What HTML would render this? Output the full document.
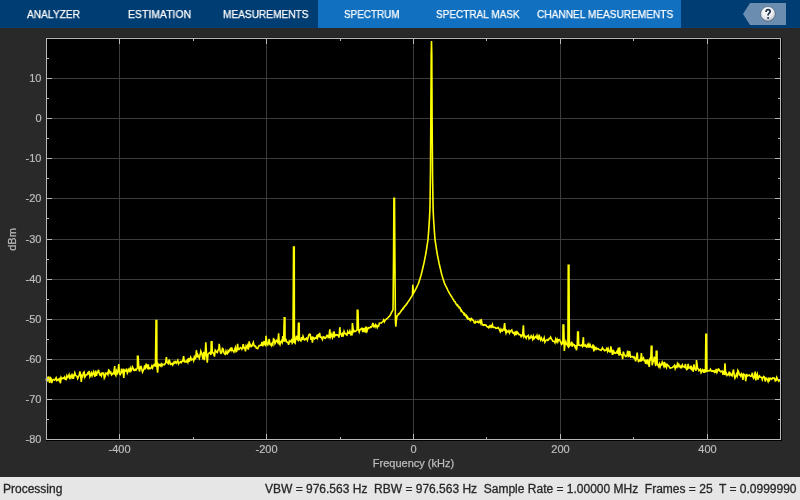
<!DOCTYPE html>
<html><head><meta charset="utf-8"><style>
html,body{margin:0;padding:0;}
body{width:800px;height:500px;overflow:hidden;background:#292929;position:relative;font-family:"Liberation Sans",sans-serif;}
#hdr{position:absolute;left:0;top:0;width:800px;height:28px;background:#003d73;}
#act{position:absolute;left:318px;top:0;width:363px;height:28px;background:#1170c0;}
.tab{position:absolute;top:8px;height:12px;line-height:12px;color:#fff;font-size:11px;font-weight:normal;transform:scaleX(0.9);transform-origin:0 0;-webkit-text-stroke:0.25px #fff;white-space:nowrap;}
#status{position:absolute;left:0;top:477px;width:800px;height:23px;background:#e6e6e6;color:#262626;font-size:12px;}
#status span{position:absolute;top:5px;line-height:14px;white-space:pre;-webkit-text-stroke:0.3px #2a2a2a;}
svg{position:absolute;left:0;top:0;will-change:transform;}
#status,.tab{will-change:transform;}
</style></head><body>
<div id="hdr"></div>
<div id="act"></div>
<div class="tab" style="left:27px;transform:scaleX(0.925)">ANALYZER</div>
<div class="tab" style="left:128px;transform:scaleX(0.95)">ESTIMATION</div>
<div class="tab" style="left:223px;transform:scaleX(0.92)">MEASUREMENTS</div>
<div class="tab" style="left:344px;transform:scaleX(0.9)">SPECTRUM</div>
<div class="tab" style="left:436px;transform:scaleX(0.91)">SPECTRAL MASK</div>
<div class="tab" style="left:537px;transform:scaleX(0.92)">CHANNEL MEASUREMENTS</div>
<svg width="800" height="28" style="top:0">
<polygon points="750,3 786,3 786,25 750,25 743,14" fill="#6b8db0"/>
<defs><radialGradient id="hg" cx="0.4" cy="0.3" r="0.8"><stop offset="0" stop-color="#ffffff"/><stop offset="0.6" stop-color="#e8eaee"/><stop offset="1" stop-color="#9aa4b0"/></radialGradient></defs>
<circle cx="768" cy="13.9" r="7.3" fill="url(#hg)" stroke="#34465e" stroke-width="0.7" stroke-opacity="0.75"/>
<path d="M766.1,11.9 C766.1,10.4 767,9.7 768.1,9.7 C769.4,9.7 770.2,10.5 770.2,11.5 C770.2,12.9 768.1,13.2 768.1,14.8 V15.5" fill="none" stroke="#1f2f4a" stroke-width="1.7"/>
<circle cx="768.1" cy="17.9" r="1" fill="#1f2f4a"/>
</svg>
<svg width="800" height="477" style="top:0">
<rect x="46" y="38" width="736" height="403" fill="#000"/><rect x="46" y="37" width="736" height="1" fill="#1f1f1f"/>
<g stroke="#3c3c3c" stroke-width="1" shape-rendering="crispEdges"><line x1="119.5" y1="38" x2="119.5" y2="439"/><line x1="266.5" y1="38" x2="266.5" y2="439"/><line x1="413.5" y1="38" x2="413.5" y2="439"/><line x1="560.5" y1="38" x2="560.5" y2="439"/><line x1="707.5" y1="38" x2="707.5" y2="439"/><line x1="46" y1="78.5" x2="780" y2="78.5"/><line x1="46" y1="118.5" x2="780" y2="118.5"/><line x1="46" y1="158.5" x2="780" y2="158.5"/><line x1="46" y1="198.5" x2="780" y2="198.5"/><line x1="46" y1="239.5" x2="780" y2="239.5"/><line x1="46" y1="279.5" x2="780" y2="279.5"/><line x1="46" y1="319.5" x2="780" y2="319.5"/><line x1="46" y1="359.5" x2="780" y2="359.5"/><line x1="46" y1="399.5" x2="780" y2="399.5"/></g>
<polyline points="46.00,378.77 46.72,380.53 47.44,380.76 48.16,376.53 48.88,378.67 49.60,382.86 50.32,377.52 51.04,378.28 51.76,383.09 52.48,380.33 53.20,379.47 53.92,379.84 54.64,380.24 55.36,378.79 56.08,377.75 56.80,380.54 57.52,379.83 58.24,379.20 58.96,380.41 59.68,379.09 60.40,383.25 61.12,377.53 61.84,378.78 62.56,378.44 63.28,377.88 64.00,378.47 64.72,377.04 65.44,379.16 66.16,379.56 66.88,375.79 67.60,377.39 68.32,376.54 69.04,374.77 69.76,379.17 70.48,376.75 71.20,375.23 71.92,377.38 72.64,375.51 73.36,378.86 74.08,375.47 74.80,372.85 75.52,375.22 76.24,375.88 76.96,376.22 77.68,378.49 78.40,376.84 79.12,375.56 79.84,371.44 80.56,374.40 81.28,381.87 82.00,375.69 82.72,376.38 83.44,372.67 84.16,371.96 84.88,377.10 85.60,375.70 86.32,374.72 87.04,374.68 87.76,372.90 88.48,373.72 89.20,371.01 89.92,376.54 90.64,374.84 91.36,373.02 92.08,375.67 92.80,373.45 93.52,371.83 94.24,374.88 94.96,376.65 95.68,370.54 96.40,375.71 97.12,373.09 97.84,372.07 98.56,369.81 99.28,373.53 100.00,375.02 100.72,374.13 101.44,375.76 102.16,372.93 102.88,373.39 103.60,373.07 104.32,378.15 105.04,376.75 105.76,373.30 106.48,373.57 107.20,373.06 107.92,374.54 108.64,370.14 109.36,370.78 110.08,373.13 110.80,372.39 111.52,374.87 112.24,374.11 112.96,373.28 113.68,373.61 114.70,366.00 115.12,374.06 115.84,375.49 116.56,371.19 117.28,373.14 118.00,371.00 118.80,364.00 119.44,373.69 120.16,374.58 120.88,373.40 121.60,368.72 122.32,371.72 123.04,370.52 123.76,377.91 124.48,370.10 125.20,370.68 125.92,371.07 126.64,368.55 127.36,373.09 128.08,371.57 128.80,369.47 129.52,370.87 130.24,368.25 130.96,370.96 131.68,369.45 132.40,366.91 133.12,368.25 133.84,370.27 134.56,370.41 135.28,369.27 136.00,370.18 136.72,369.13 137.44,367.67 137.45,356.30 138.15,356.30 138.88,368.91 139.60,371.46 140.32,367.00 141.04,366.48 141.76,368.91 142.48,372.13 143.20,370.75 143.92,369.04 144.64,365.51 145.36,369.39 146.20,363.70 146.80,366.17 147.52,367.63 148.24,364.48 148.96,368.73 149.68,368.13 150.40,368.48 151.12,368.04 151.84,366.04 152.56,367.89 153.28,365.62 154.00,364.66 154.72,365.90 155.44,366.07 156.05,320.60 156.75,320.60 156.88,366.07 157.60,372.60 158.32,364.44 159.04,365.65 159.76,364.65 160.48,365.80 161.20,364.05 161.92,365.85 162.64,364.24 163.36,364.53 164.08,364.83 164.80,364.18 165.52,363.12 166.40,357.20 166.96,361.55 167.68,363.07 168.40,363.67 169.12,359.56 169.84,361.71 170.56,364.41 171.28,364.19 172.00,363.37 172.72,365.01 173.44,363.66 174.16,361.88 174.88,362.92 175.60,361.81 176.32,363.15 177.04,361.74 177.76,360.38 178.48,363.74 179.20,362.38 179.92,362.52 180.64,361.66 181.36,362.50 182.08,361.10 182.80,361.32 183.60,356.20 184.24,361.05 184.96,362.11 185.68,361.37 186.40,361.78 187.12,360.37 187.84,362.17 188.56,358.02 189.28,361.82 190.00,359.40 190.72,357.36 191.44,359.88 192.16,359.24 192.88,359.02 193.60,360.72 194.32,357.08 195.04,358.79 195.76,357.78 196.40,350.20 197.20,357.24 197.92,355.07 198.64,356.74 199.36,358.33 200.08,355.02 200.80,351.10 201.52,353.23 202.24,355.55 202.96,359.40 203.68,351.85 204.40,360.26 205.12,354.68 205.80,342.20 206.56,353.80 207.28,362.60 208.00,354.25 208.72,353.54 209.44,352.59 210.16,352.35 210.88,354.96 211.25,341.80 211.95,341.80 212.32,352.83 213.04,352.65 213.76,353.72 214.48,356.60 215.20,350.21 215.92,351.06 216.64,352.14 217.36,352.57 218.08,349.89 218.80,349.48 219.20,343.80 220.24,352.09 220.96,353.29 221.68,352.72 222.40,348.53 223.12,349.08 223.84,352.17 224.56,353.99 225.28,354.29 226.00,351.25 226.72,353.46 227.44,353.86 228.16,350.72 228.88,351.69 229.60,350.13 230.32,348.73 231.04,350.32 231.76,347.51 232.48,350.29 233.20,350.98 233.92,352.01 234.64,349.39 235.36,347.51 236.08,351.60 236.80,351.14 237.60,343.80 238.24,349.46 238.96,349.68 239.68,348.64 240.40,347.54 241.12,347.98 241.84,349.31 242.56,347.75 243.20,344.20 244.00,347.97 244.72,347.63 245.44,351.28 246.16,345.91 246.88,347.18 247.60,345.48 248.32,349.64 249.20,341.40 249.76,345.91 250.48,344.89 251.20,346.59 251.92,345.95 252.64,344.35 253.36,342.45 254.08,345.76 254.80,346.29 255.52,346.04 256.24,348.11 256.96,348.22 257.68,348.61 258.40,346.97 259.12,345.57 259.84,345.59 260.56,345.11 261.28,345.01 262.00,341.84 262.72,346.32 263.44,344.03 264.16,341.05 264.88,344.67 265.60,345.43 266.00,335.80 267.04,344.02 267.76,344.85 268.48,342.71 269.20,339.01 269.92,344.29 270.64,343.99 271.36,345.57 272.08,343.44 272.80,344.73 273.52,338.98 274.24,339.44 274.96,343.55 275.68,342.08 276.40,340.33 277.12,341.09 277.84,342.43 278.60,333.40 279.28,342.79 280.00,344.51 280.72,341.97 281.44,340.94 282.16,342.41 282.88,336.11 283.60,341.69 284.25,317.80 284.95,317.80 285.04,341.55 285.76,338.74 286.48,341.91 287.20,342.07 287.92,342.54 288.64,344.86 289.36,341.00 290.08,341.89 290.80,341.12 291.52,340.05 292.24,343.12 292.96,341.90 293.55,247.00 294.25,247.00 294.40,342.17 295.12,343.12 295.84,338.74 296.56,335.81 297.28,339.13 298.00,340.02 298.45,323.40 299.15,323.40 299.44,339.90 300.16,340.01 300.88,340.84 301.60,337.08 302.32,340.19 303.04,336.32 303.76,338.40 304.48,340.01 305.20,339.71 305.92,338.68 306.64,338.12 307.36,340.15 308.08,337.79 308.80,334.86 309.60,334.20 310.24,334.33 310.96,339.91 311.68,336.70 312.40,342.59 313.12,337.45 313.84,337.94 314.56,338.85 315.28,337.95 316.00,338.23 316.72,336.37 317.44,338.05 318.16,334.24 318.88,337.08 319.60,333.00 320.32,337.17 321.04,337.02 321.76,338.34 322.48,339.59 323.20,336.81 323.92,337.03 324.64,338.03 325.36,338.31 326.08,337.33 326.80,335.45 327.52,335.32 328.24,337.53 328.96,337.13 329.80,329.40 330.40,337.23 331.12,335.74 331.84,334.05 332.56,337.77 333.28,336.28 334.00,331.40 334.72,336.00 335.44,334.93 336.16,334.67 336.88,335.29 337.60,334.91 338.32,335.58 339.04,337.52 339.80,327.20 340.48,334.16 341.20,333.96 341.92,336.81 342.64,333.75 343.36,335.17 344.08,331.51 344.80,333.50 345.52,333.54 346.24,334.65 346.96,335.11 347.68,331.46 348.40,333.28 349.12,333.18 349.84,331.02 350.56,333.92 351.28,332.37 352.00,335.47 352.40,323.00 353.44,331.64 354.16,330.76 354.88,331.59 355.60,331.25 356.32,330.74 357.04,329.91 357.25,310.20 357.95,310.20 358.48,329.68 359.20,331.95 359.92,329.61 360.64,329.47 361.36,328.47 362.08,328.26 362.80,332.22 363.52,328.19 364.24,330.44 364.96,328.74 365.68,332.66 366.40,326.58 367.12,330.75 367.84,328.68 368.56,327.62 369.28,327.88 370.00,327.70 370.72,326.66 371.44,326.92 372.16,325.51 372.88,322.88 373.60,326.35 374.32,325.64 375.04,326.96 375.76,324.62 376.48,325.78 377.20,327.56 377.92,325.64 378.64,326.08 379.36,323.14 380.08,322.96 380.80,322.95 381.52,322.98 382.24,322.01 382.96,321.55 383.68,320.01 384.40,321.67 385.12,320.07 385.84,319.64 386.56,318.87 387.28,318.42 388.00,317.80 388.72,316.90 389.44,316.32 390.16,315.22 390.88,313.95 391.60,312.47 392.32,311.08 393.04,309.65 393.60,250.00 393.90,198.30 394.50,198.30 394.90,260.00 395.40,320.00 395.80,326.60 396.40,320.00 397.20,315.60 398.00,315.23 398.50,313.81 399.00,314.05 399.50,313.57 400.00,312.55 400.50,311.83 401.00,311.50 401.50,310.06 402.00,310.01 402.50,309.72 403.00,308.30 403.50,308.42 404.00,307.34 404.50,306.22 405.00,306.19 405.50,305.33 406.00,305.06 406.50,304.00 407.00,303.81 407.50,302.63 408.00,302.13 408.50,301.18 409.00,300.49 409.50,300.02 410.00,299.09 410.50,298.24 411.00,297.30 411.50,296.81 412.00,295.89 412.50,294.92 412.80,284.80 413.50,293.17 414.00,292.33 414.50,291.51 415.00,290.61 415.50,289.59 416.00,288.54 416.50,287.57 417.00,286.55 417.50,285.52 418.00,284.51 418.50,283.38 419.00,281.80 419.50,280.22 420.00,278.64 420.50,277.06 421.00,275.47 421.50,273.53 422.00,271.42 422.50,269.32 423.00,267.21 423.50,265.11 424.00,263.00 424.50,260.44 425.00,257.88 425.50,255.32 426.00,252.76 426.50,249.54 427.00,246.24 427.50,242.95 428.00,239.66 428.50,233.07 429.00,225.67 429.50,217.92 430.00,207.15 430.50,170.00 431.20,55.00 431.50,41.00 431.80,55.00 432.10,120.00 432.60,178.75 433.10,209.31 433.60,219.74 434.10,227.15 434.60,234.56 435.10,240.32 435.60,243.61 436.10,246.90 436.60,250.20 437.10,253.27 437.60,255.83 438.10,258.39 438.60,260.95 439.10,263.42 439.60,265.53 440.10,267.63 440.60,269.74 441.10,271.84 441.60,273.95 442.10,275.79 442.60,277.37 443.10,278.95 443.60,280.54 444.10,282.12 444.60,283.70 445.10,284.71 445.60,285.73 446.10,286.72 446.60,287.71 447.10,288.71 447.60,289.73 448.10,290.78 448.60,291.65 449.10,292.61 449.60,293.62 450.10,294.26 450.60,295.30 451.10,296.01 451.60,296.63 452.10,297.62 452.60,298.26 453.10,299.36 453.60,299.70 454.10,301.00 454.60,301.59 455.10,301.68 455.60,303.16 456.10,304.14 456.60,304.22 457.10,305.40 457.60,305.14 458.10,306.43 458.60,306.39 459.10,307.77 459.60,307.55 460.10,307.82 460.60,309.63 461.10,311.05 461.60,310.47 462.10,311.72 462.60,312.03 463.10,312.45 463.60,313.52 464.10,314.64 464.60,313.88 465.10,315.37 465.60,315.82 466.10,315.31 466.60,317.37 467.10,318.07 467.60,317.16 468.10,318.89 468.60,318.51 469.10,318.71 469.60,319.68 470.00,319.02 470.72,320.39 471.44,318.57 472.16,319.23 472.88,320.25 473.60,320.53 474.32,322.90 475.04,323.11 475.76,321.43 476.48,322.08 477.20,322.22 477.92,321.27 478.64,322.64 479.36,322.48 480.40,319.40 480.80,322.68 481.52,321.02 482.24,324.94 482.96,324.82 483.68,325.23 484.40,324.71 485.12,325.28 485.84,325.02 486.56,326.07 487.28,326.82 488.00,326.75 488.72,327.71 489.44,326.05 490.16,326.98 490.88,325.83 491.60,326.97 492.40,324.60 493.04,327.27 493.76,327.42 494.48,327.27 495.20,327.49 495.92,328.40 496.64,328.16 497.36,328.24 498.08,327.42 498.80,328.37 499.52,330.05 500.24,331.72 500.96,329.24 501.68,330.88 502.40,331.12 503.12,329.34 503.84,329.71 504.60,323.00 505.28,330.16 506.00,333.08 506.72,330.68 507.44,331.76 508.16,331.87 508.88,330.68 509.60,333.02 510.32,331.48 511.04,330.57 511.76,329.97 512.48,332.49 513.20,333.15 513.92,332.40 514.64,334.54 515.36,332.83 516.08,335.07 516.80,330.91 517.52,333.47 518.24,333.12 518.96,334.54 519.68,334.48 520.40,334.78 521.12,336.63 521.84,335.49 522.56,335.67 523.40,325.40 524.00,336.80 524.72,335.71 525.44,336.68 526.16,338.19 526.88,336.36 527.60,335.96 528.32,335.42 529.04,338.73 529.76,337.57 530.48,337.93 531.20,335.74 531.92,336.80 532.64,339.10 533.36,336.31 534.08,338.75 534.80,337.67 535.52,336.59 536.24,337.47 536.96,335.50 537.68,338.79 538.40,339.22 539.12,334.73 539.84,338.08 540.56,339.98 541.28,337.89 542.00,339.40 542.72,340.76 543.44,339.86 544.16,337.91 544.88,342.19 545.60,340.88 546.32,340.22 547.04,339.55 547.76,340.42 548.48,339.92 549.20,338.38 549.92,338.49 550.64,337.22 551.36,339.08 552.08,339.66 552.80,341.23 553.52,341.22 554.24,341.43 554.96,342.73 555.68,339.28 556.40,341.36 557.12,339.39 557.84,341.82 558.56,339.75 559.28,339.69 560.00,340.48 560.72,342.46 561.44,344.01 562.16,342.43 562.88,344.29 563.05,325.00 563.75,325.00 564.32,351.00 565.04,343.92 565.76,341.64 566.48,344.25 567.20,344.85 567.92,346.07 568.25,265.40 568.95,265.40 569.36,345.99 570.08,345.00 570.80,345.03 571.52,341.72 572.24,346.73 572.96,344.00 573.68,344.93 574.40,344.91 575.12,347.12 575.84,345.11 576.56,350.28 577.28,343.76 577.65,332.00 578.35,332.00 578.72,345.17 579.44,345.13 580.16,345.63 580.88,345.52 581.60,344.99 582.32,346.11 583.40,337.20 583.76,345.89 584.48,345.96 585.20,345.09 585.92,346.58 586.64,347.12 587.36,344.87 588.08,346.22 588.80,344.28 589.52,347.57 590.24,345.01 590.96,346.59 591.68,347.67 592.40,347.86 593.12,344.51 593.84,351.40 594.56,347.46 595.28,348.99 596.00,347.71 596.72,349.23 597.44,348.62 598.16,348.62 598.88,349.31 599.60,349.78 600.32,349.96 601.04,350.45 601.76,349.11 602.48,347.78 603.20,349.26 603.92,349.71 604.64,350.72 605.36,350.25 606.08,349.97 606.80,348.52 607.52,351.12 608.24,348.89 608.96,351.09 609.68,351.79 610.40,351.71 610.80,346.40 611.84,351.31 612.56,354.88 613.28,349.91 614.00,353.04 614.72,352.48 615.44,353.23 616.16,352.79 616.88,351.45 617.60,353.74 618.32,347.83 619.04,355.76 619.50,347.40 620.48,354.00 621.20,354.63 621.92,354.74 622.64,359.12 623.36,351.64 624.08,354.36 624.80,354.92 625.52,356.49 626.24,356.30 626.96,355.38 627.68,350.67 628.40,356.41 629.12,355.91 629.60,351.00 630.56,357.11 631.28,356.79 632.00,356.54 632.72,356.62 633.44,357.76 634.16,357.01 634.88,357.88 635.60,361.37 636.32,358.59 637.20,352.60 637.76,358.92 638.48,361.40 639.20,360.86 639.92,359.78 640.64,361.46 641.40,353.00 642.08,360.12 642.80,359.41 643.52,358.10 644.24,360.69 644.96,360.41 645.68,363.84 646.40,359.68 647.12,362.31 647.84,359.45 648.56,363.72 649.28,366.86 650.00,357.81 650.72,360.56 651.25,346.20 651.95,346.20 652.16,365.20 652.88,362.36 653.60,360.35 654.32,356.61 655.04,361.83 655.76,366.06 656.25,351.40 656.95,351.40 657.20,363.53 657.92,365.06 658.64,366.59 659.36,364.02 660.08,366.88 660.80,364.33 661.52,364.74 662.24,362.19 662.96,364.06 663.68,365.88 664.40,361.78 665.12,366.15 665.84,364.71 666.56,367.24 667.28,364.62 668.00,365.41 668.72,365.91 669.44,367.13 670.16,368.29 670.88,367.91 671.60,367.81 672.32,367.49 673.04,366.97 673.76,366.30 674.48,365.40 675.20,368.50 675.92,366.43 676.64,367.15 677.36,363.94 678.08,366.16 678.80,364.39 679.52,366.06 680.24,367.38 680.96,366.13 681.68,367.36 682.40,364.97 683.12,366.62 683.84,366.81 684.56,367.21 685.50,364.00 686.00,368.08 686.72,369.46 687.44,368.94 688.16,363.96 688.88,367.80 689.60,367.44 690.32,368.28 691.04,365.79 691.76,369.18 692.48,368.25 693.20,371.59 693.92,364.37 694.64,368.69 695.36,369.04 696.08,370.68 696.50,360.00 697.52,368.14 698.24,368.99 698.96,370.65 699.68,369.70 700.40,369.15 701.12,372.72 701.84,371.66 702.56,369.67 703.28,370.30 704.00,372.84 704.72,369.11 705.44,372.57 705.85,334.20 706.55,334.20 706.88,371.16 707.60,371.01 708.32,371.04 709.04,370.58 709.76,370.73 710.48,369.30 711.20,370.81 711.92,371.28 712.64,370.75 713.36,371.47 714.08,370.83 714.80,372.29 715.52,371.89 716.24,368.86 716.96,372.31 717.68,370.59 718.40,368.97 719.12,369.59 719.84,371.00 720.56,371.84 721.28,371.42 722.00,370.99 722.72,373.46 723.44,372.24 724.16,374.71 725.00,363.20 725.60,373.92 726.32,373.04 727.04,375.33 727.76,374.40 728.48,374.62 729.20,371.79 729.92,375.04 730.64,373.67 731.36,375.05 732.08,375.79 732.80,372.34 733.52,369.57 734.24,375.29 734.96,378.08 735.68,376.56 736.40,374.23 737.12,375.94 737.84,370.36 738.56,371.63 739.28,374.80 740.00,374.68 740.72,376.05 741.44,373.64 742.16,374.60 742.88,379.96 743.60,374.10 744.32,374.58 745.04,375.33 745.76,381.15 746.48,373.94 747.20,376.09 747.92,375.33 748.64,375.43 749.36,374.97 750.08,375.92 750.80,376.38 751.52,375.98 752.40,372.80 752.96,376.97 753.68,378.29 754.40,376.94 755.20,371.60 755.84,380.44 756.56,375.65 757.28,373.96 758.00,379.59 758.72,376.56 759.44,375.90 760.16,377.27 760.88,377.22 761.60,377.38 762.32,379.58 763.04,377.32 763.76,376.37 764.48,377.14 765.20,381.48 765.92,378.28 766.64,378.16 767.36,379.80 768.08,381.57 768.80,378.88 769.52,380.24 770.24,378.09 770.96,378.52 771.68,379.27 772.40,378.08 773.12,378.34 773.84,377.87 774.56,378.37 775.28,380.82 776.00,380.54 776.72,377.38 777.44,378.94 778.16,380.27 778.88,381.24 779.60,379.75" fill="none" stroke="#ffff00" stroke-width="1.6" stroke-linejoin="miter"/>
<g stroke="#b8b8b8" stroke-width="1" shape-rendering="crispEdges"><line x1="119.5" y1="38" x2="119.5" y2="44"/><line x1="119.5" y1="440" x2="119.5" y2="434"/><line x1="266.5" y1="38" x2="266.5" y2="44"/><line x1="266.5" y1="440" x2="266.5" y2="434"/><line x1="413.5" y1="38" x2="413.5" y2="44"/><line x1="413.5" y1="440" x2="413.5" y2="434"/><line x1="560.5" y1="38" x2="560.5" y2="44"/><line x1="560.5" y1="440" x2="560.5" y2="434"/><line x1="707.5" y1="38" x2="707.5" y2="44"/><line x1="707.5" y1="440" x2="707.5" y2="434"/><line x1="193.5" y1="38" x2="193.5" y2="41"/><line x1="193.5" y1="440" x2="193.5" y2="437"/><line x1="340.5" y1="38" x2="340.5" y2="41"/><line x1="340.5" y1="440" x2="340.5" y2="437"/><line x1="486.5" y1="38" x2="486.5" y2="41"/><line x1="486.5" y1="440" x2="486.5" y2="437"/><line x1="633.5" y1="38" x2="633.5" y2="41"/><line x1="633.5" y1="440" x2="633.5" y2="437"/><line x1="46" y1="38.5" x2="52" y2="38.5"/><line x1="781" y1="38.5" x2="775" y2="38.5"/><line x1="46" y1="78.5" x2="52" y2="78.5"/><line x1="781" y1="78.5" x2="775" y2="78.5"/><line x1="46" y1="118.5" x2="52" y2="118.5"/><line x1="781" y1="118.5" x2="775" y2="118.5"/><line x1="46" y1="158.5" x2="52" y2="158.5"/><line x1="781" y1="158.5" x2="775" y2="158.5"/><line x1="46" y1="198.5" x2="52" y2="198.5"/><line x1="781" y1="198.5" x2="775" y2="198.5"/><line x1="46" y1="239.5" x2="52" y2="239.5"/><line x1="781" y1="239.5" x2="775" y2="239.5"/><line x1="46" y1="279.5" x2="52" y2="279.5"/><line x1="781" y1="279.5" x2="775" y2="279.5"/><line x1="46" y1="319.5" x2="52" y2="319.5"/><line x1="781" y1="319.5" x2="775" y2="319.5"/><line x1="46" y1="359.5" x2="52" y2="359.5"/><line x1="781" y1="359.5" x2="775" y2="359.5"/><line x1="46" y1="399.5" x2="52" y2="399.5"/><line x1="781" y1="399.5" x2="775" y2="399.5"/><line x1="46" y1="439.5" x2="52" y2="439.5"/><line x1="781" y1="439.5" x2="775" y2="439.5"/><line x1="46" y1="58.5" x2="49" y2="58.5"/><line x1="781" y1="58.5" x2="778" y2="58.5"/><line x1="46" y1="98.5" x2="49" y2="98.5"/><line x1="781" y1="98.5" x2="778" y2="98.5"/><line x1="46" y1="138.5" x2="49" y2="138.5"/><line x1="781" y1="138.5" x2="778" y2="138.5"/><line x1="46" y1="178.5" x2="49" y2="178.5"/><line x1="781" y1="178.5" x2="778" y2="178.5"/><line x1="46" y1="218.5" x2="49" y2="218.5"/><line x1="781" y1="218.5" x2="778" y2="218.5"/><line x1="46" y1="259.5" x2="49" y2="259.5"/><line x1="781" y1="259.5" x2="778" y2="259.5"/><line x1="46" y1="299.5" x2="49" y2="299.5"/><line x1="781" y1="299.5" x2="778" y2="299.5"/><line x1="46" y1="339.5" x2="49" y2="339.5"/><line x1="781" y1="339.5" x2="778" y2="339.5"/><line x1="46" y1="379.5" x2="49" y2="379.5"/><line x1="781" y1="379.5" x2="778" y2="379.5"/><line x1="46" y1="419.5" x2="49" y2="419.5"/><line x1="781" y1="419.5" x2="778" y2="419.5"/></g>
<rect x="46.5" y="38.5" width="734" height="401" fill="none" stroke="#b8b8b8" stroke-width="1" shape-rendering="crispEdges"/>
<g font-family="Liberation Sans" font-size="11" fill="#bdbdbd" stroke="#bdbdbd" stroke-width="0.2"><text x="119.5" y="453" text-anchor="middle">-400</text><text x="266.5" y="453" text-anchor="middle">-200</text><text x="413.5" y="453" text-anchor="middle">0</text><text x="560.5" y="453" text-anchor="middle">200</text><text x="707.5" y="453" text-anchor="middle">400</text><text x="41.5" y="82" text-anchor="end">10</text><text x="41.5" y="122" text-anchor="end">0</text><text x="41.5" y="162" text-anchor="end">-10</text><text x="41.5" y="202" text-anchor="end">-20</text><text x="41.5" y="243" text-anchor="end">-30</text><text x="41.5" y="283" text-anchor="end">-40</text><text x="41.5" y="323" text-anchor="end">-50</text><text x="41.5" y="363" text-anchor="end">-60</text><text x="41.5" y="403" text-anchor="end">-70</text><text x="41.5" y="443" text-anchor="end">-80</text>
<text x="413.5" y="467" text-anchor="middle" stroke="#bdbdbd" stroke-width="0.25">Frequency (kHz)</text>
<text transform="translate(16,239.5) rotate(-90)" text-anchor="middle" stroke="#bdbdbd" stroke-width="0.2">dBm</text>
</g>
</svg>
<div id="status"><span style="left:3px">Processing</span><span style="left:265px">VBW = 976.563 Hz  RBW = 976.563 Hz  Sample Rate = 1.00000 MHz  Frames = 25  T = 0.0999990</span></div>
</body></html>
